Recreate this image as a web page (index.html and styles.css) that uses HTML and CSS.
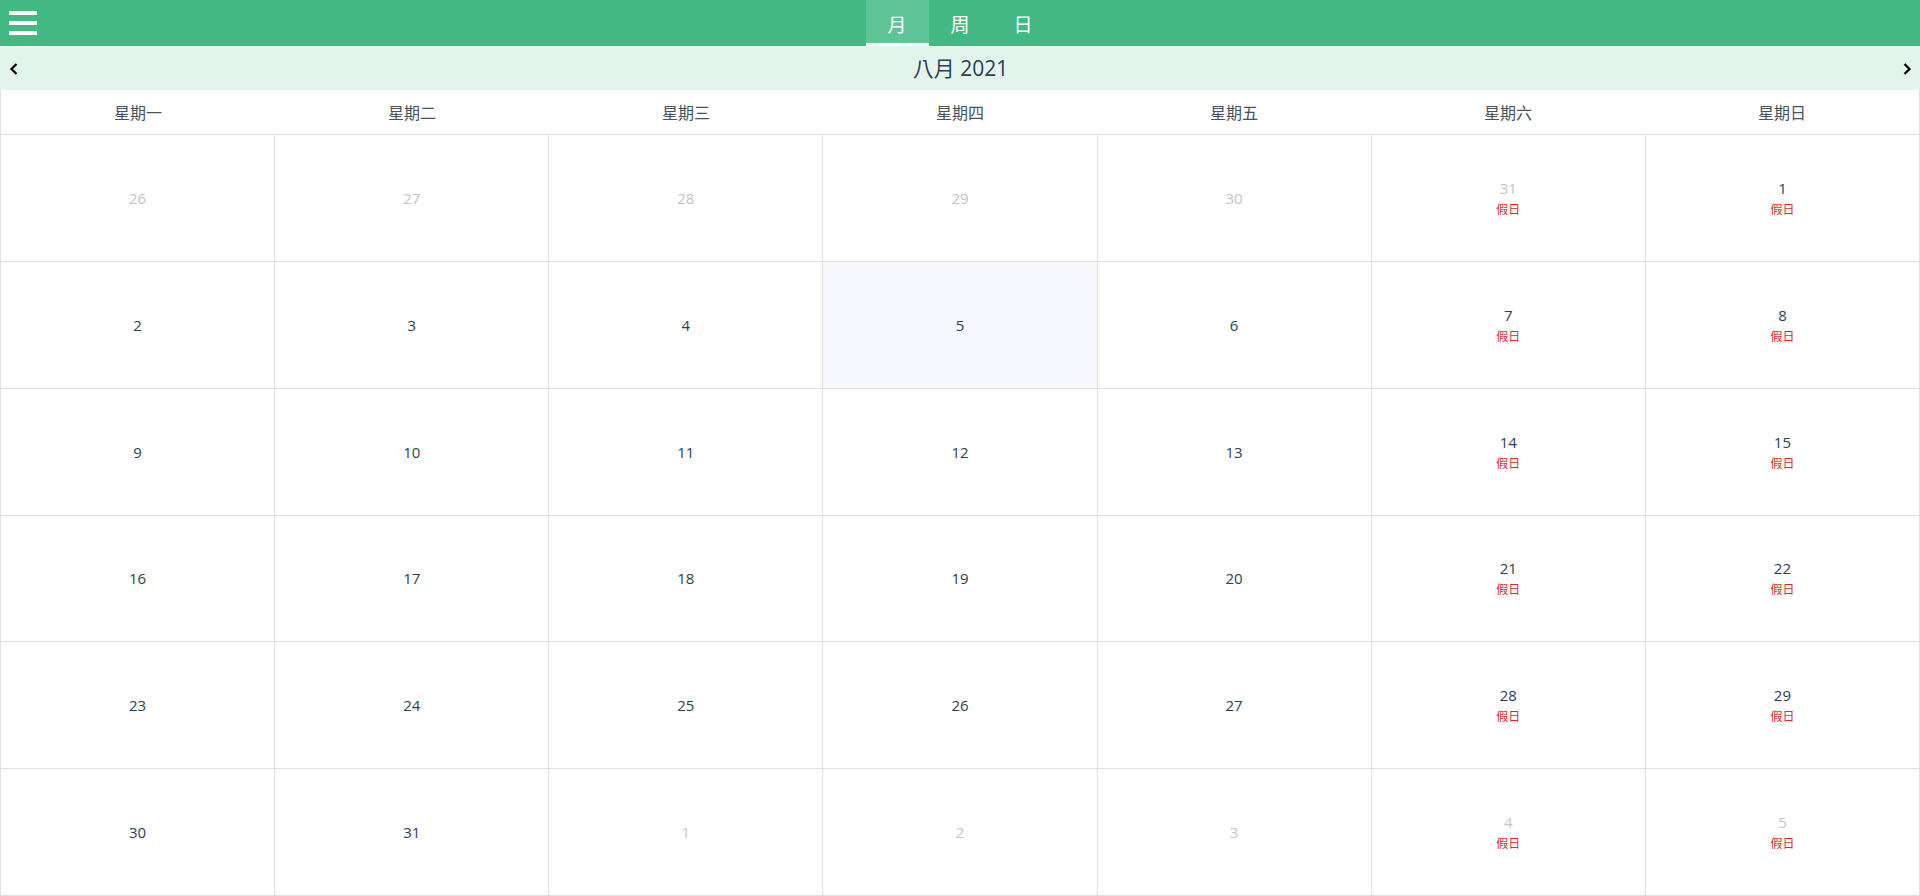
FILE: index.html
```html
<!DOCTYPE html>
<html lang="zh-Hant">
<head>
<meta charset="utf-8">
<title>月曆</title>
<link rel="stylesheet" href="styles.css">
</head>
<body>
<div class="app">
  <header class="topbar">
    <div class="menu">
      <span class="bar"></span><span class="bar"></span><span class="bar"></span>
    </div>
    <nav class="tabs">
      <div class="tab active">月</div>
      <div class="tab">周</div>
      <div class="tab">日</div>
    </nav>
    <div class="spacer"></div>
  </header>
  <div class="navbar">
    <svg class="chev" width="10" height="14" viewBox="0 0 10 14"><polyline points="7.5,2 2.5,7 7.5,12" fill="none" stroke="#000" stroke-width="2.2"/></svg>
    <div class="title">八月 2021</div>
    <svg class="chev" width="10" height="14" viewBox="0 0 10 14"><polyline points="2.5,2 7.5,7 2.5,12" fill="none" stroke="#000" stroke-width="2.2"/></svg>
  </div>
  <div class="weekdays">
    <div class="wd">星期一</div>
    <div class="wd">星期二</div>
    <div class="wd">星期三</div>
    <div class="wd">星期四</div>
    <div class="wd">星期五</div>
    <div class="wd">星期六</div>
    <div class="wd">星期日</div>
  </div>
  <div class="month">
    <div class="day outside"><div class="num">26</div></div>
    <div class="day outside"><div class="num">27</div></div>
    <div class="day outside"><div class="num">28</div></div>
    <div class="day outside"><div class="num">29</div></div>
    <div class="day outside"><div class="num">30</div></div>
    <div class="day outside"><div class="num">31</div><div class="hol">假日</div></div>
    <div class="day"><div class="num">1</div><div class="hol">假日</div></div>

    <div class="day"><div class="num">2</div></div>
    <div class="day"><div class="num">3</div></div>
    <div class="day"><div class="num">4</div></div>
    <div class="day today"><div class="num">5</div></div>
    <div class="day"><div class="num">6</div></div>
    <div class="day"><div class="num">7</div><div class="hol">假日</div></div>
    <div class="day"><div class="num">8</div><div class="hol">假日</div></div>

    <div class="day"><div class="num">9</div></div>
    <div class="day"><div class="num">10</div></div>
    <div class="day"><div class="num">11</div></div>
    <div class="day"><div class="num">12</div></div>
    <div class="day"><div class="num">13</div></div>
    <div class="day"><div class="num">14</div><div class="hol">假日</div></div>
    <div class="day"><div class="num">15</div><div class="hol">假日</div></div>

    <div class="day"><div class="num">16</div></div>
    <div class="day"><div class="num">17</div></div>
    <div class="day"><div class="num">18</div></div>
    <div class="day"><div class="num">19</div></div>
    <div class="day"><div class="num">20</div></div>
    <div class="day"><div class="num">21</div><div class="hol">假日</div></div>
    <div class="day"><div class="num">22</div><div class="hol">假日</div></div>

    <div class="day"><div class="num">23</div></div>
    <div class="day"><div class="num">24</div></div>
    <div class="day"><div class="num">25</div></div>
    <div class="day"><div class="num">26</div></div>
    <div class="day"><div class="num">27</div></div>
    <div class="day"><div class="num">28</div><div class="hol">假日</div></div>
    <div class="day"><div class="num">29</div><div class="hol">假日</div></div>

    <div class="day"><div class="num">30</div></div>
    <div class="day"><div class="num">31</div></div>
    <div class="day outside"><div class="num">1</div></div>
    <div class="day outside"><div class="num">2</div></div>
    <div class="day outside"><div class="num">3</div></div>
    <div class="day outside"><div class="num">4</div><div class="hol">假日</div></div>
    <div class="day outside"><div class="num">5</div><div class="hol">假日</div></div>
  </div>
</div>
</body>
</html>
```
FILE: styles.css
```css
* { box-sizing: border-box; }
html, body { margin: 0; padding: 0; }
body {
  font-family: "Open Sans", "Noto Sans CJK TC", sans-serif;
  color: #2c3e50;
  background: #fff;
}
.app {
  height: 100vh;
  display: flex;
  flex-direction: column;
}
.topbar {
  height: 46px;
  flex: 0 0 46px;
  background: #42b983;
  display: grid;
  grid-template-columns: 1fr auto 1fr;
  align-items: stretch;
}
.menu {
  display: flex;
  flex-direction: column;
  justify-content: flex-start;
  gap: 6px;
  padding: 11px 0 0 9px;
}
.bar {
  display: block;
  width: 28px;
  height: 4px;
  background: #fff;
}
.tabs {
  display: flex;
}
.tab {
  width: 63px;
  display: flex;
  align-items: center;
  justify-content: center;
  color: #fff;
  font-size: 19px;
  font-family: "Noto Sans CJK TC", sans-serif;
  border-bottom: 3px solid transparent;
  padding-top: 3px;
}
.tab.active {
  background: rgba(255, 255, 255, 0.15);
  border-bottom-color: #fff;
}
.navbar {
  height: 44px;
  flex: 0 0 44px;
  background: #e3f4ec;
  display: flex;
  align-items: center;
  justify-content: space-between;
  padding: 0 8px 0 9px;
}
.chev { display: block; margin-top: 2px; }
.title {
  font-size: 21px;
  color: #2c3e50;
  line-height: 1;
}
.weekdays {
  height: 45px;
  flex: 0 0 45px;
  display: grid;
  grid-template-columns: repeat(7, 1fr);
  border-left: 1px solid #e0e0e0;
  border-bottom: 1px solid #e0e0e0;
  border-right: 1px solid #e0e0e0;
}
.wd {
  display: flex;
  align-items: center;
  justify-content: center;
  font-size: 16px;
  color: #46525e;
  font-family: "Noto Sans CJK TC", sans-serif;
}
.month {
  flex: 1;
  display: grid;
  grid-template-columns: repeat(7, 1fr);
  grid-template-rows: repeat(6, 1fr);
  border-left: 1px solid #e0e0e0;
}
.day {
  border-right: 1px solid #e0e0e0;
  border-bottom: 1px solid #e0e0e0;
  display: flex;
  flex-direction: column;
  align-items: center;
  justify-content: center;
}
.day.today { background: #f8f8ff; }
.num {
  font-size: 15px;
  line-height: 22px;
  color: #2c3e50;
}
.outside .num { color: #c4c4c4; }
.hol {
  font-size: 12px;
  line-height: 20px;
  color: #d32f2f;
  font-family: "Noto Sans CJK TC", sans-serif;
}
```
